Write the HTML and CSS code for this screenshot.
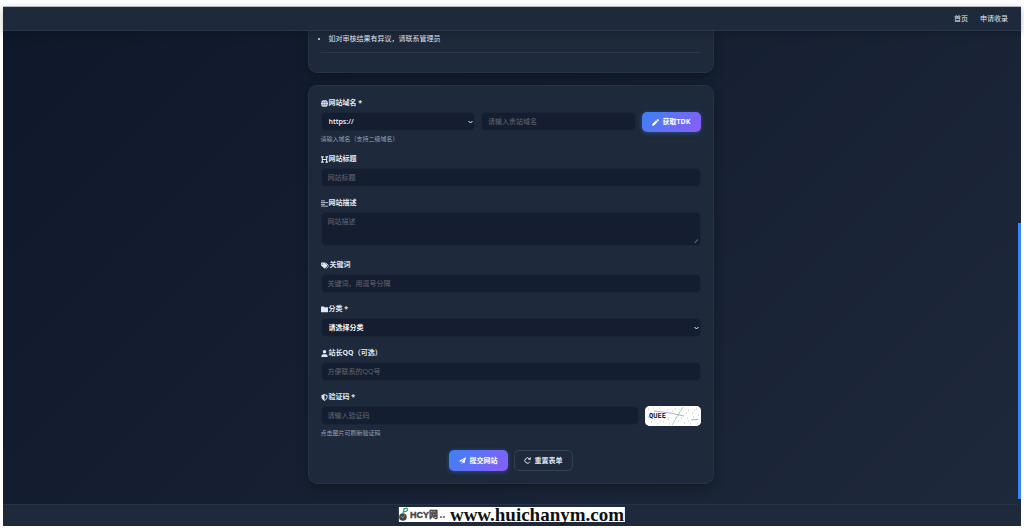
FILE: index.html
```html
<!DOCTYPE html>
<html lang="zh-CN">
<head>
    <meta charset="UTF-8">
    <meta name="viewport" content="width=device-width, initial-scale=1.0">
    <title>申请收录</title>
    <link rel="stylesheet" href="styles.css">
</head>
<body>
    <div class="page">
        <header class="navbar">
            <nav class="nav-links">
                <a href="#">首页</a>
                <a href="#">申请收录</a>
            </nav>
        </header>
        <div class="scroll-area">
            <div class="content">
                <main class="container">
                    <section class="card notice">
                        <ul>
                            <li>如对审核结果有异议，请联系管理员</li>
                        </ul>
                        <hr>
                    </section>
                    <form class="card">
                        <div class="form-group">
                            <label for="domain">
                                <svg class="icon" viewBox="0 0 16 16"><circle cx="8" cy="8" r="8" fill="currentColor"/><path d="M0 5.500h16M0 10.500h16M8 .5C4 4 4 12 8 15.500C12 12 12 4 8 .5" fill="none" stroke="#1e293b" stroke-width=".7"/></svg>
                                网站域名 *
                            </label>
                            <div class="input-row">
                                <select class="control" aria-label="协议">
                                    <option>https://</option>
                                    <option>http://</option>
                                </select>
                                <input class="control" type="text" id="domain" placeholder="请输入贵站域名">
                                <button class="btn btn-primary" type="button">
                                    <svg class="icon" viewBox="0 0 16 16"><path d="M0 16l1-4.500L9.500 3l3.500 3.500L4.500 15zM10.500 2L12 .5q1-.8 2 0L15.500 2q.8 1 0 2L14 5.500z" fill="currentColor"/></svg>
                                    获取TDK
                                </button>
                            </div>
                            <small>请输入域名（支持二级域名）</small>
                        </div>
                        <div class="form-group">
                            <label for="title">
                                <svg class="icon" viewBox="0 0 16 16"><path d="M0 2h6M10 2h6M0 14h6M10 14h6M3 2v12M13 2v12M3 8h10" fill="none" stroke="currentColor" stroke-width="2.400"/></svg>
                                网站标题
                            </label>
                            <input class="control" type="text" id="title" placeholder="网站标题">
                        </div>
                        <div class="form-group">
                            <label for="desc">
                                <svg class="icon" viewBox="0 0 16 16"><path d="M0 2h9M0 6h16M0 10h9M0 14h16" fill="none" stroke="currentColor" stroke-width="1.800"/></svg>
                                网站描述
                            </label>
                            <textarea class="control" id="desc" placeholder="网站描述"></textarea>
                        </div>
                        <div class="form-group">
                            <label for="keywords">
                                <svg class="icon icon-wide" viewBox="0 0 18 16"><path d="M0 2.500Q0 1 1.500 1H7q1 0 1.700.7l5.600 5.600q1 1 0 2l-5 5q-1 1-2 0L.7 8.700Q0 8 0 7z" fill="currentColor"/><path d="M10.500 1.500l6 6q1.200 1.200 0 2.400L12 15" fill="none" stroke="currentColor" stroke-width="1.800"/><circle cx="3.500" cy="4.500" r="1.200" fill="#1e293b"/></svg>
                                关键词
                            </label>
                            <input class="control" type="text" id="keywords" placeholder="关键词，用逗号分隔">
                        </div>
                        <div class="form-group">
                            <label for="category">
                                <svg class="icon" viewBox="0 0 16 16"><path d="M0 2.500Q0 1 1.500 1h4.500l2 2h6.500Q16 3 16 4.500v8.500q0 1.500-1.500 1.500h-13Q0 14.500 0 13z" fill="currentColor"/></svg>
                                分类 *
                            </label>
                            <select class="control" id="category">
                                <option>请选择分类</option>
                            </select>
                        </div>
                        <div class="form-group">
                            <label for="qq">
                                <svg class="icon" viewBox="0 0 16 16"><circle cx="8" cy="4" r="4" fill="currentColor"/><path d="M1 16v-2.500Q1 9.500 5 9.500h6q4 0 4 4V16z" fill="currentColor"/></svg>
                                站长QQ（可选）
                            </label>
                            <input class="control" type="text" id="qq" placeholder="方便联系的QQ号">
                        </div>
                        <div class="form-group">
                            <label for="captcha">
                                <svg class="icon" viewBox="0 0 16 16"><path d="M8 0l7 3v4q0 6-7 9Q1 13 1 7V3z" fill="currentColor"/><path d="M8 2.300V13.700q5-2.500 5-6.700V4.400z" fill="#1e293b"/></svg>
                                验证码 *
                            </label>
                            <div class="input-row">
                                <input class="control" type="text" id="captcha" placeholder="请输入验证码">
                                <button class="captcha" type="button" aria-label="刷新验证码">
                                    <svg viewBox="0 0 56 20">
                                        <rect width="56" height="20" fill="#fff"/>
                                        <path d="M9 5l16 2 14 3M46 14l7-.5" fill="none" stroke="#8b86c9" stroke-width=".7"/>
                                        <path d="M38 1L27 19" fill="none" stroke="#84bd9b" stroke-width=".7"/>
                                        <path d="M19 13l2-2M23 14l1-3" fill="none" stroke="#e2a5a5" stroke-width=".6"/>
                                        <path d="M3 3h1M14 2h1M22 4h1M30 3h1M43 4h1M51 3h1M47 7h1M53 9h1M41 7h1M33 15h1M39 17h1M45 18h1M52 17h1M6 16h1M12 18h1M18 16h1M24 18h1M36 12h1M42 12h1M3 11h1" stroke="#a8a8b8" stroke-width=".8"/>
                                        <path d="M8 2h1M27 5h1M34 6h1M48 11h1M30 12h1M9 14h1M43 15h1M49 4h1M15 15h1" stroke="#dba0a8" stroke-width=".8"/>
                                        <text x="4" y="12" class="captcha-text">QUEE</text>
                                    </svg>
                                </button>
                            </div>
                            <small>点击图片可刷新验证码</small>
                        </div>
                        <div class="actions">
                            <button class="btn btn-primary" type="submit">
                                <svg class="icon" viewBox="0 0 16 16"><path d="M16 0L0 9l4 1.700L13 3.500 6 11.500 12.500 14zM6 12.700V16l2.500-2.300z" fill="currentColor"/></svg>
                                提交网站
                            </button>
                            <button class="btn btn-outline" type="reset">
                                <svg class="icon" viewBox="0 0 16 16"><path d="M12.500 4.200A6 6 0 1 0 13.500 10.500" fill="none" stroke="currentColor" stroke-width="2.200"/><path d="M15.500 0v6.500H9z" fill="currentColor"/></svg>
                                重置表单
                            </button>
                        </div>
                    </form>
                </main>
                <footer class="footer"></footer>
            </div>
            <div class="scrollbar"><div class="thumb"></div></div>
        </div>
        <div class="watermark">
            <svg class="mark" viewBox="0 0 48 15">
                <circle cx="4" cy="10" r="3.800" fill="#444"/>
                <path d="M2 9l2 2 2-3" fill="none" stroke="#999" stroke-width=".8"/>
                <path d="M4 7L5.500 1M5.500 2q3-2 3 .5T5 4.500" fill="none" stroke="#2fa866" stroke-width="1.300"/>
                <text x="11" y="11" class="mark-text">HCY网</text>
                <path d="M41 10h2M44 10h2" stroke="#555" stroke-width="1.500"/>
            </svg>
            <span>www.huichanym.com</span>
        </div>
    </div>
</body>
</html>
```
FILE: styles.css
```css
* {
    box-sizing: border-box;
}
body {
    margin: 0;
    padding: 6px 3px;
    background-color: #fff;
    font-family: "Open Sans", "Noto Sans CJK SC", sans-serif;
    font-size: 7px;
    line-height: 10px;
    color: #e2e8f0;
}
.page {
    position: relative;
    border-top: 1px solid #c3c7cf;
    background: linear-gradient(135deg, #0f172a 0%, #1e293b 100%);
}
.navbar {
    display: flex;
    justify-content: flex-end;
    align-items: center;
    height: 24px;
    padding: 0 13px;
    background-color: #1e293b;
    border-bottom: 1px solid #293548;
    box-shadow: 0 2px 8px rgba(0, 0, 0, 0.25);
    position: relative;
}
.nav-links {
    display: flex;
    gap: 12px;
}
.nav-links a {
    color: #e2e8f0;
    text-decoration: none;
}
.scroll-area {
    display: flex;
}
.content {
    flex: 1;
}
.scrollbar {
    display: flex;
    width: 3px;
    flex-direction: column;
    justify-content: flex-end;
    padding-bottom: 27px;
}
.thumb {
    height: 59%;
    background-color: #3b82f6;
}
.container {
    display: flex;
    flex-direction: column;
    gap: 12px;
    max-width: 406px;
    margin: 0 auto 20px;
}
.card {
    padding: 12px;
    background-color: #1e293b;
    border: 1px solid #263246;
    border-radius: 9px;
    box-shadow: 0 4px 12px rgba(0, 0, 0, 0.3);
}
.notice {
    padding-top: 3px;
    padding-bottom: 19px;
    border-top: 0;
    border-radius: 0 0 9px 9px;
}
.notice ul {
    margin: 0 0 8px;
    padding-left: 8px;
}
.notice hr {
    margin: 0;
    border: 0;
    border-top: 1px solid #2c384b;
}
.form-group {
    margin-bottom: 11px;
}
label {
    display: flex;
    align-items: center;
    gap: 1px;
    margin-bottom: 4px;
    font-weight: bold;
}
.icon {
    width: 7px;
    height: 7px;
    flex: none;
}
.icon-wide {
    width: 8px;
}
.input-row {
    display: flex;
    gap: 6px;
}
.control {
    display: block;
    flex: 1;
    width: 100%;
    min-width: 0;
    height: 19px;
    padding: 0 6px;
    font: inherit;
    color: #f1f5f9;
    background-color: #151d30;
    border: 1px solid #1b2538;
    border-radius: 5px;
}
.control::placeholder {
    color: #65696f;
}
select.control {
    padding: 0 5px 0 7px;
    font-weight: 600;
    appearance: none;
    background-image: url("data:image/svg+xml,%3Csvg xmlns='http://www.w3.org/2000/svg' viewBox='0 0 10 8'%3E%3Cpath d='M1 2l4 4 4-4' fill='none' stroke='%23f1f5f9' stroke-width='2'/%3E%3C/svg%3E");
    background-repeat: no-repeat;
    background-position: right 1px center;
    background-size: 5px 4px;
}
textarea.control {
    height: 34px;
    margin-bottom: 14px;
    padding: 4px 6px;
}
textarea.control::-webkit-resizer {
    background: linear-gradient(135deg, transparent 50%, #475569 50%, #475569 75%, transparent 75%) right 2px bottom 2px / 4px 4px no-repeat;
}
small {
    display: block;
    height: 8px;
    margin-top: 4px;
    font-size: 6px;
    line-height: 8px;
    color: #94a3b8;
}
.btn {
    display: flex;
    align-items: center;
    justify-content: center;
    gap: 4px;
    width: 59px;
    height: 21px;
    padding: 0;
    font: inherit;
    font-weight: bold;
    color: #fff;
    border: 0;
    border-radius: 5px;
}
.btn-primary {
    background: linear-gradient(135deg, #3b82f6, #8b5cf6);
    box-shadow: 0 1px 5px rgba(59, 130, 246, 0.4);
}
.btn-outline {
    color: #e2e8f0;
    background-color: transparent;
    border: 1px solid #334155;
}
.input-row .btn {
    height: 20px;
    margin-bottom: -1px;
}
.captcha {
    width: 56px;
    height: 20px;
    margin-bottom: -1px;
    padding: 0;
    border: 0;
    border-radius: 5px;
    overflow: hidden;
    background-color: #fff;
}
.captcha svg {
    display: block;
}
.captcha-text {
    font: bold 7px "DejaVu Sans Mono", monospace;
    fill: #222;
}
.actions {
    display: flex;
    justify-content: center;
    gap: 6px;
    padding-top: 2px;
}
.footer {
    height: 22px;
    background-color: #1e293b;
    border-top: 1px solid #263347;
}
.watermark {
    position: absolute;
    left: 50%;
    bottom: 4px;
    display: flex;
    align-items: center;
    gap: 3px;
    height: 15px;
    padding-right: 1px;
    transform: translateX(-50%);
    background-color: #fff;
    color: #111;
    font: bold 19px "Liberation Serif", serif;
    line-height: 15px;
}
.mark {
    width: 48px;
    height: 15px;
}
.mark-text {
    font: bold 9px "Liberation Sans", "Noto Sans CJK SC", sans-serif;
    fill: #444;
    stroke: #444;
    stroke-width: 0.4px;
}
```
